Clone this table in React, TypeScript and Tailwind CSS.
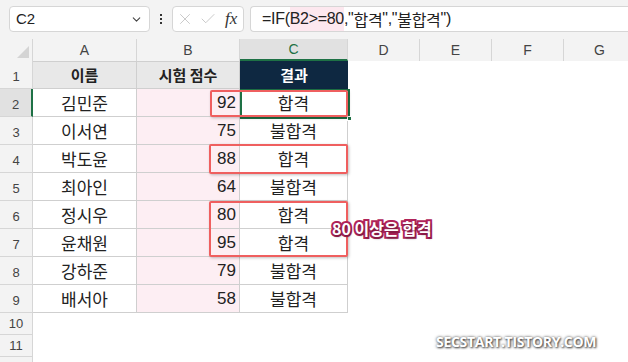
import { ChevronDown, X, Check } from "lucide-react";

const rows = [
  { name: "김민준", score: 92, pass: true },
  { name: "이서연", score: 75, pass: false },
  { name: "박도윤", score: 88, pass: true },
  { name: "최아인", score: 64, pass: false },
  { name: "정시우", score: 80, pass: true },
  { name: "윤채원", score: 95, pass: true },
  { name: "강하준", score: 79, pass: false },
  { name: "배서아", score: 58, pass: false },
];

const cols = ["A", "B", "C", "D", "E", "F", "G"];
const colW = ["w-[104px]", "w-[103px]", "w-[108px]", "w-[72px]", "w-[72px]", "w-[72px]", "w-[72px]"];

const App = () => {
  return (
    <div className="relative w-[628px] h-[362px] overflow-hidden bg-white text-[#222] font-['Noto_Sans_CJK_KR','Noto_Sans',sans-serif]">
      {/* 수식 입력줄 */}
      <div className="flex h-[39px] items-start gap-0 bg-[#f3f3f3] pt-[6px]">
        <div className="ml-[9px] flex h-[26px] w-[141px] shrink-0 items-center justify-between rounded-[4px] border border-[#d6d6d6] bg-white pl-[6px] pr-[6px]">
          <span className="font-['Liberation_Sans',sans-serif] text-[15px]">C2</span>
          <ChevronDown size={13} strokeWidth={2} className="text-[#444]" />
        </div>
        <div className="flex h-[26px] w-[22px] shrink-0 flex-col items-center justify-center gap-[2px]">
          <span className="h-[2px] w-[2px] bg-[#333]" />
          <span className="h-[2px] w-[2px] bg-[#333]" />
          <span className="h-[2px] w-[2px] bg-[#333]" />
        </div>
        <div className="flex h-[26px] w-[72px] shrink-0 items-center rounded-[4px] border border-[#d6d6d6] bg-white pl-[3px]">
          <X size={18} strokeWidth={1} className="text-[#b8b8b8]" />
          <Check size={18} strokeWidth={1} className="ml-[5px] text-[#b8b8b8]" />
          <span className="ml-[8px] font-['Liberation_Serif',serif] text-[17px] italic text-[#333]">fx</span>
        </div>
        <div className="ml-[6px] flex h-[26px] flex-1 items-center rounded-l-[4px] border border-r-0 border-[#d6d6d6] bg-white pl-[11px] text-[16px] tracking-[-0.3px]">
          <span className="font-['Liberation_Sans',sans-serif]">=IF(</span>
          <span className="bg-[#fde8ef] font-['Liberation_Sans',sans-serif]">B2&gt;=80</span>
          <span className="font-['Liberation_Sans',sans-serif]">,"</span>
          <span>합격</span>
          <span className="font-['Liberation_Sans',sans-serif]">","</span>
          <span>불합격</span>
          <span className="font-['Liberation_Sans',sans-serif]">")</span>
        </div>
      </div>

      {/* 열 머리글 */}
      <div className="flex h-[22px] bg-[#f3f3f3] font-['Liberation_Sans',sans-serif] text-[14px] text-[#444]">
        <div className="relative w-[33px] shrink-0 border-r border-[#d6d6d6]">
          <div className="absolute bottom-[3px] right-[3px] h-0 w-0 border-b-[12px] border-l-[12px] border-b-[#d4d4d4] border-l-transparent" />
        </div>
        {cols.map((c, i) => (
          <div
            key={c}
            className={`${colW[i]} flex shrink-0 items-center justify-center border-r border-[#d6d6d6] ${
              c === "C" ? "border-b-2 border-b-[#1e7145] bg-[#e1e1e1] text-[#1e7145]" : ""
            }`}
          >
            {c}
          </div>
        ))}
      </div>

      {/* 1행: 머리글 */}
      <div className="flex h-[28px]">
        <div className="flex w-[33px] shrink-0 items-end justify-center border-r border-b border-[#d6d6d6] bg-[#f3f3f3] pb-[2px] font-['Liberation_Sans',sans-serif] text-[13px] text-[#444]">
          1
        </div>
        <div className="flex w-[104px] shrink-0 items-center justify-center border-r border-b border-t border-[#cfcfcf] bg-[#e8e8e8] text-[15px] font-bold">
          이름
        </div>
        <div className="flex w-[103px] shrink-0 items-center justify-center border-r border-b border-t border-[#cfcfcf] bg-[#e8e8e8] text-[15px] font-bold">
          시험 점수
        </div>
        <div className="flex w-[108px] shrink-0 items-center justify-center border-b border-t border-[#0e2841] bg-[#0e2841] text-[15px] font-bold text-white">
          결과
        </div>
      </div>

      {/* 데이터 행 */}
      {rows.map((r, i) => (
        <div key={r.name} className="flex h-[28px]">
          <div
            className={`flex w-[33px] shrink-0 items-end justify-center border-b border-[#d6d6d6] pb-[2px] font-['Liberation_Sans',sans-serif] text-[13px] text-[#444] ${
              i === 0 ? "border-r-2 border-r-[#1e7145] bg-[#e1e1e1] text-[#1e7145]" : "border-r bg-[#f3f3f3]"
            }`}
          >
            {i + 2}
          </div>
          <div className="flex w-[104px] shrink-0 items-center justify-center border-r border-b border-[#cfcfcf] text-[17px]">
            {r.name}
          </div>
          <div className="flex w-[103px] shrink-0 items-center justify-end border-r border-b border-[#cfcfcf] bg-[#fdeef3] pr-[3px] font-['Liberation_Sans',sans-serif] text-[17px]">
            {r.score}
          </div>
          <div className="flex w-[108px] shrink-0 items-center justify-center border-r border-b border-[#cfcfcf] text-[17px]">
            {r.pass ? "합격" : "불합격"}
          </div>
        </div>
      ))}

      {/* 10, 11행 */}
      {[10, 11].map((n) => (
        <div key={n} className="flex h-[22px]">
          <div className="flex w-[33px] shrink-0 items-center justify-center border-r border-b border-[#d6d6d6] bg-[#f3f3f3] font-['Liberation_Sans',sans-serif] text-[13px] text-[#444]">
            {n}
          </div>
        </div>
      ))}
      <div className="flex h-[10px]">
        <div className="w-[33px] shrink-0 border-r border-[#d6d6d6] bg-[#f3f3f3]" />
      </div>

      {/* 선택된 셀 C2 */}
      <div className="absolute left-[240px] top-[89px] h-[30px] w-[110px] border-2 border-[#1e7145]" />
      <div className="absolute left-[347px] top-[116px] h-[5px] w-[5px] border border-white bg-[#1e7145]" />

      {/* 강조 박스 */}
      <div className="absolute left-[210px] top-[90px] h-[27px] w-[138px] rounded-[2px] border-2 border-[#ef5f5f] shadow-[1px_1px_3px_rgba(0,0,0,0.25)]" />
      <div className="absolute left-[209px] top-[144px] h-[30px] w-[139px] rounded-[2px] border-2 border-[#ef5f5f] shadow-[1px_1px_3px_rgba(0,0,0,0.25)]" />
      <div className="absolute left-[209px] top-[201px] h-[56px] w-[139px] rounded-[2px] border-2 border-[#ef5f5f] shadow-[1px_1px_3px_rgba(0,0,0,0.25)]" />

      <div className="absolute left-[332px] top-[216px] text-[16px] font-bold text-white [paint-order:stroke_fill] [-webkit-text-stroke:4px_#b0245a] [text-shadow:1px_2px_2px_rgba(0,0,0,0.35)]">
        80 이상은 합격
      </div>

      {/* 워터마크 */}
      <div className="absolute left-[436px] top-[331px] font-['Open_Sans',sans-serif] text-[14px] font-bold tracking-[-0.3px] text-white [text-shadow:0_0_3px_#444,1px_1px_2px_#555]">
        SECSTART.TISTORY.COM
      </div>
    </div>
  );
};

export default App;
